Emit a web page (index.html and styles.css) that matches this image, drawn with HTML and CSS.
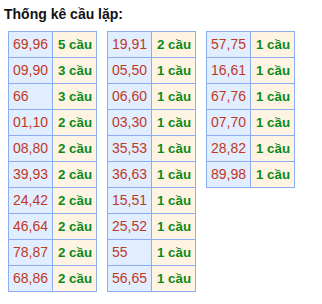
FILE: index.html
```html
<!DOCTYPE html>
<html>
<head>
<meta charset="utf-8">
<link rel="stylesheet" href="styles.css">
</head>
<body>
<div class="title">Thống kê cầu lặp:</div>
<div class="tables">
  <table class="tk">
    <tr><td class="num">69,96</td><td class="cnt">5 cầu</td></tr>
    <tr><td class="num">09,90</td><td class="cnt">3 cầu</td></tr>
    <tr><td class="num">66</td><td class="cnt">3 cầu</td></tr>
    <tr><td class="num">01,10</td><td class="cnt">2 cầu</td></tr>
    <tr><td class="num">08,80</td><td class="cnt">2 cầu</td></tr>
    <tr><td class="num">39,93</td><td class="cnt">2 cầu</td></tr>
    <tr><td class="num">24,42</td><td class="cnt">2 cầu</td></tr>
    <tr><td class="num">46,64</td><td class="cnt">2 cầu</td></tr>
    <tr><td class="num">78,87</td><td class="cnt">2 cầu</td></tr>
    <tr><td class="num">68,86</td><td class="cnt">2 cầu</td></tr>
  </table>
  <table class="tk">
    <tr><td class="num">19,91</td><td class="cnt">2 cầu</td></tr>
    <tr><td class="num">05,50</td><td class="cnt">1 cầu</td></tr>
    <tr><td class="num">06,60</td><td class="cnt">1 cầu</td></tr>
    <tr><td class="num">03,30</td><td class="cnt">1 cầu</td></tr>
    <tr><td class="num">35,53</td><td class="cnt">1 cầu</td></tr>
    <tr><td class="num">36,63</td><td class="cnt">1 cầu</td></tr>
    <tr><td class="num">15,51</td><td class="cnt">1 cầu</td></tr>
    <tr><td class="num">25,52</td><td class="cnt">1 cầu</td></tr>
    <tr><td class="num">55</td><td class="cnt">1 cầu</td></tr>
    <tr><td class="num">56,65</td><td class="cnt">1 cầu</td></tr>
  </table>
  <table class="tk">
    <tr><td class="num">57,75</td><td class="cnt">1 cầu</td></tr>
    <tr><td class="num">16,61</td><td class="cnt">1 cầu</td></tr>
    <tr><td class="num">67,76</td><td class="cnt">1 cầu</td></tr>
    <tr><td class="num">07,70</td><td class="cnt">1 cầu</td></tr>
    <tr><td class="num">28,82</td><td class="cnt">1 cầu</td></tr>
    <tr><td class="num">89,98</td><td class="cnt">1 cầu</td></tr>
  </table>
</div>
</body>
</html>
```
FILE: styles.css
```css
html, body {
  margin: 0;
  padding: 0;
  background: #ffffff;
}
body {
  font-family: "Liberation Sans", Arial, sans-serif;
  font-size: 10pt;
  color: #000;
}
.title {
  font-weight: bold;
  font-size: 14px;
  line-height: 16px;
  padding: 6px 4px 0 4px;
  color: #111;
}
.tables {
  display: flex;
  align-items: flex-start;
  gap: 10px;
  padding: 9px 0 0 8px;
}
.tk {
  border-collapse: collapse;
  border: 1px solid #8cadf2;
}
.tk td {
  border: 1px solid #8cadf2;
  height: 25px;
  padding: 0 0 0 4px;
  box-sizing: border-box;
  vertical-align: middle;
  white-space: nowrap;
  line-height: 15px;
}
.tk td.num {
  width: 44px;
  font-size: 14px;
  background: #e1eeff;
  color: #c0391f;
}
.tk td.cnt {
  width: 44px;
  padding-left: 5px;
  background: #fff4e2;
  color: #0a8a1a;
  font-weight: bold;
}
.tk tr {
  height: 26px;
}
```
